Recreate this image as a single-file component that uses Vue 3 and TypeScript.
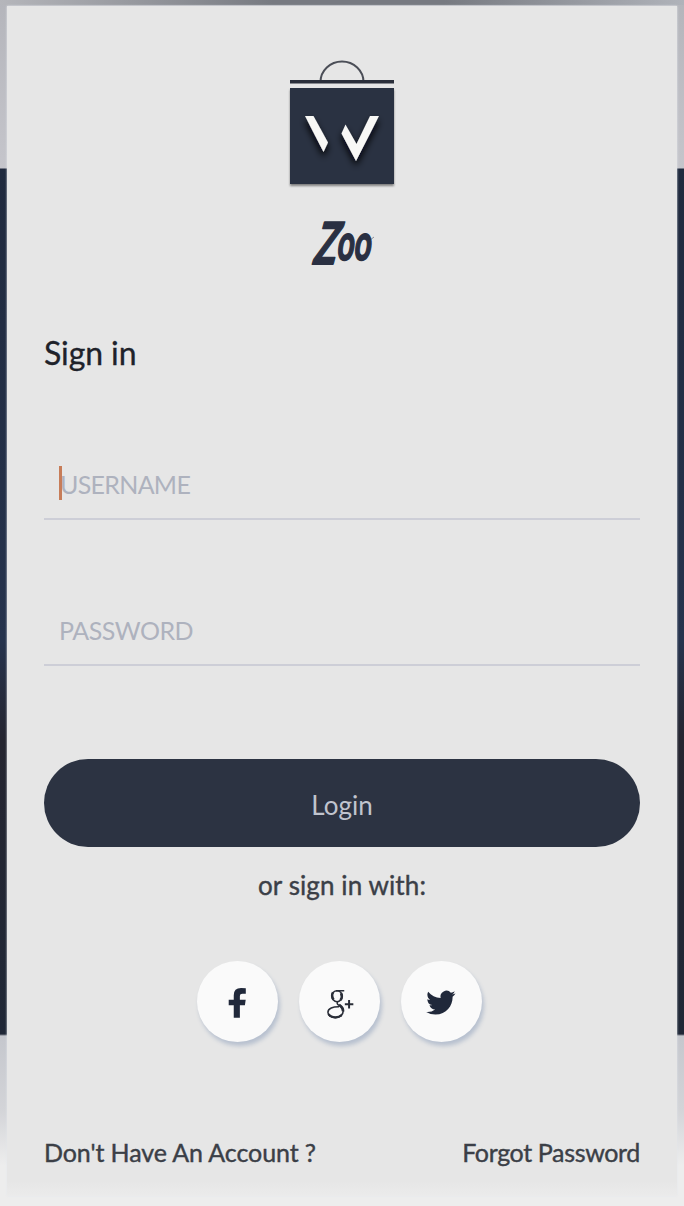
<script setup lang="ts">
import { ref } from 'vue'

const username = ref('')
const password = ref('')
</script>

<template>
  <main class="page">
    <form class="card" @submit.prevent>
      <svg class="logo" viewBox="0 0 106 132" aria-label="Shopping bag">
        <defs>
          <filter id="drop" x="-30%" y="-30%" width="160%" height="180%">
            <feDropShadow dx="0" dy="5" stdDeviation="3.5" flood-color="#03060d" flood-opacity="1" />
          </filter>
          <filter id="base" x="-10%" y="-10%" width="120%" height="125%">
            <feDropShadow dx="0" dy="2" stdDeviation="1.2" flood-color="#000" flood-opacity=".45" />
          </filter>
        </defs>
        <path d="M31.500 22A21.500 20.500 0 0 1 74.500 22" fill="none" stroke="#4b4e57" stroke-width="2" />
        <rect x="1" y="20" width="104" height="3.500" fill="#2b2f3b" />
        <rect x="1" y="28" width="104" height="96" fill="#2a3143" filter="url(#base)" />
        <g fill="#f8f8f6" filter="url(#drop)">
          <path d="M16 56H24.500L39 82.500L34.500 92Z" />
          <path d="M52.500 73.500L56.500 64.500L67.500 84L81 56H90L67 101Z" />
        </g>
      </svg>

      <svg class="wordmark" viewBox="0 0 76 54">
        <text class="wordmark-z" transform="translate(7.500 47.500) skewX(-15)" textLength="23" lengthAdjust="spacingAndGlyphs">Z</text>
        <text class="wordmark-o" transform="translate(32 44) skewX(-8)" textLength="34" lengthAdjust="spacingAndGlyphs">oo</text>
        <path d="M58 22Q64 27 70 21" fill="none" stroke="#2a3042" stroke-width=".7" opacity=".7" />
      </svg>

      <h1 class="title">Sign in</h1>

      <label class="field focused">
        <input v-model="username" type="text" placeholder="USERNAME" />
      </label>
      <label class="field">
        <input v-model="password" type="password" placeholder="PASSWORD" />
      </label>

      <button class="login" type="submit">Login</button>
      <p class="alternative">or sign in with:</p>

      <div class="socials">
        <button class="social" type="button" aria-label="Facebook">
          <svg viewBox="0 0 82 82">
            <path d="M49.400 27.600V33.200H46Q43.400 33.200 43.400 35.700V39.300H49.300L48.500 44.800H43.400V57.500H37.200V44.800H32.100V39.300H37.200V34.600Q37.200 27.300 44.600 27.300Q47.600 27.300 49.400 27.600Z" fill="#20283a" />
          </svg>
        </button>
        <button class="social" type="button" aria-label="Google plus">
          <svg viewBox="0 0 82 82">
            <g fill="none" stroke="#292d37">
              <ellipse cx="38.500" cy="35.600" rx="5.200" ry="5.600" stroke-width="1.500" />
              <path d="M34.400 31.800Q32.500 35 34.900 39.200M42.500 32.500Q44.400 36 42 39.600" stroke-width="2.500" />
              <path d="M37.500 30H45.800M39.400 41Q37.400 43 40.500 44.900" stroke-width="1.500" />
              <path d="M40.500 44.600Q44.800 47.100 44.800 50.300C44.800 55 40.700 57.300 36.800 57.300C32.200 57.300 29.300 55 29.300 52C29.300 47.900 34.400 46.300 40.500 46.400" stroke-width="1.600" />
              <path d="M40.600 44.400Q44.800 47.300 44.600 51" stroke-width="2.800" />
              <path d="M30 53.700Q32.200 57 36.800 57Q40.900 57 43.200 54.600" stroke-width="2.300" />
              <path d="M46.400 43.700H55M50.700 39.400V48" stroke-width="2" />
            </g>
          </svg>
        </button>
        <button class="social" type="button" aria-label="Twitter">
          <svg viewBox="0 0 82 82">
            <path transform="translate(25.500 27.300) scale(1.240)" d="M23.953 4.570a10 10 0 0 1-2.825.775 4.958 4.958 0 0 0 2.163-2.723 9.990 9.990 0 0 1-3.127 1.184 4.920 4.920 0 0 0-8.384 4.482C7.690 8.095 4.067 6.130 1.640 3.162a4.822 4.822 0 0 0-.666 2.475c0 1.710.870 3.213 2.188 4.096a4.904 4.904 0 0 1-2.228-.616v.060a4.923 4.923 0 0 0 3.946 4.827 4.996 4.996 0 0 1-2.212.085 4.936 4.936 0 0 0 4.604 3.417 9.867 9.867 0 0 1-6.102 2.105c-.390 0-.779-.023-1.170-.067a13.995 13.995 0 0 0 7.557 2.209c9.053 0 13.998-7.496 13.998-13.985 0-.210 0-.420-.015-.630A9.935 9.935 0 0 0 23.953 4.570Z" fill="#20283a" />
          </svg>
        </button>
      </div>

      <footer class="links">
        <a>Don't Have An Account ?</a>
        <a class="forgot">Forgot Password</a>
      </footer>
    </form>
  </main>
</template>

<style>
body {
  background: #ececec;
}
</style>

<style scoped>
.page {
  box-sizing: border-box;
  width: 684px;
  height: 1206px;
  padding: 6px 7px 10px;
  overflow: hidden;
  font-family: Lato, 'Liberation Sans', sans-serif;
  background:
    linear-gradient(90deg, #b5b6bb, #777a81 40%, #777a81 65%, #b0b3ba) 0 0 / 100% 5px no-repeat,
    linear-gradient(180deg, #b4b5bb 0, #c5c5cb 168px, #202a3e 169px, #26334d 640px, #252530 740px, #202837 1034px, #c5c7cd 1036px, #d3d4d8 1110px, #ededed 1165px);
}

.card {
  box-sizing: border-box;
  display: flex;
  flex-direction: column;
  height: 1190px;
  padding: 54px 37px 0;
  background: linear-gradient(#e6e6e6 1175px, #ebebeb);
  box-shadow: 0 0 2px #e4e7eb;
}

.logo {
  width: 106px;
  height: 132px;
  flex: none;
  align-self: center;
  overflow: visible;
}

.wordmark {
  width: 76px;
  height: 54px;
  margin-top: 24px;
  flex: none;
  align-self: center;
  overflow: visible;
}

.wordmark text {
  font-family: Lato, sans-serif;
  font-weight: 700;
  fill: #2a3042;
  stroke: #2a3042;
  stroke-width: 1.8px;
  stroke-linejoin: round;
}

.wordmark-z {
  font-size: 58px;
}

.wordmark-o {
  font-size: 50px;
}

.title {
  height: 44px;
  margin: 61px 0 0;
  font-size: 32px;
  font-weight: 400;
  line-height: 44px;
  letter-spacing: -0.1px;
  color: #20222a;
  -webkit-text-stroke: 0.3px #20222a;
}

.field {
  display: flex;
  position: relative;
  box-sizing: border-box;
  height: 70px;
  margin-top: 76px;
  border-bottom: 2px solid #cdced7;
}

.title + .field {
  margin-top: 75px;
}

.field.focused::before {
  content: '';
  position: absolute;
  left: 15px;
  top: 16px;
  width: 3px;
  height: 34px;
  background: #c77c58;
}

.field input {
  width: 100%;
  padding: 0 15px;
  border: 0;
  outline: 0;
  background: transparent;
  font: 400 25px / 70px Lato, sans-serif;
  letter-spacing: -0.5px;
  color: #2d3443;
}

.field.focused input {
  padding-left: 16px;
  letter-spacing: -0.7px;
}

.field input::placeholder {
  color: #aeb2be;
  opacity: 1;
}

.login {
  height: 88px;
  margin: 93px 0 0;
  flex: none;
  border: 0;
  border-radius: 44px;
  background: #2c3342;
  font: 400 26px / 90px Lato, sans-serif;
  color: #c0c4ce;
}

.alternative {
  height: 36px;
  margin: 20px 0 0;
  font-size: 26px;
  line-height: 36px;
  letter-spacing: 0.1px;
  text-align: center;
  color: #3b3f47;
  -webkit-text-stroke: 0.4px #3b3f47;
}

.socials {
  display: flex;
  justify-content: center;
  gap: 21px;
  margin: 58px 0 0;
  padding-right: 5px;
}

.social {
  width: 81px;
  height: 81px;
  padding: 0;
  border: 0;
  border-radius: 50%;
  background: #fafafa;
  box-shadow: 2px 4px 4px #b7c0cf;
}

.social svg {
  display: block;
  width: 81px;
  height: 81px;
}

.links {
  display: flex;
  justify-content: space-between;
  margin-top: 92px;
  font-size: 25px;
  line-height: 36px;
  letter-spacing: -0.1px;
  color: #3b3f47;
  -webkit-text-stroke: 0.4px #3b3f47;
}

.forgot {
  letter-spacing: -0.35px;
}
</style>
